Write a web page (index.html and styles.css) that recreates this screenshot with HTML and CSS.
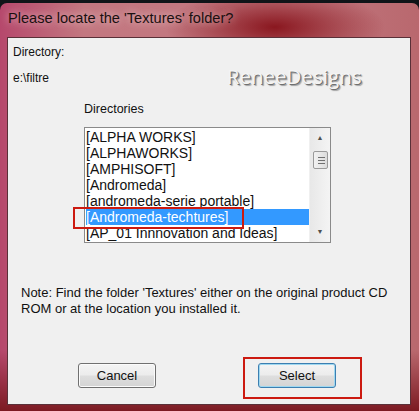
FILE: index.html
```html
<!DOCTYPE html>
<html lang="en">
<head>
    <meta charset="UTF-8">
    <title>Please locate the 'Textures' folder?</title>
    <link rel="stylesheet" href="styles.css">
</head>
<body>
    <div class="window">
        <div class="titlebar">Please locate the 'Textures' folder?</div>
        <div class="client">
            <div class="label">Directory:</div>
            <div class="path-row">
                <span class="path">e:\filtre</span>
                <span class="logo">ReneeDesigns</span>
            </div>

            <div class="dirs">
                <div class="label">Directories</div>
                <div class="listbox">
                    <ul class="items">
                        <li>[ALPHA WORKS]</li>
                        <li>[ALPHAWORKS]</li>
                        <li>[AMPHISOFT]</li>
                        <li>[Andromeda]</li>
                        <li>[andromeda-serie portable]</li>
                        <li class="selected">[Andromeda-techtures]</li>
                        <li>[AP_01 Innnovation and Ideas]</li>
                    </ul>
                    <div class="scrollbar">
                        <span class="arrow">&#9650;</span>
                        <span class="thumb"></span>
                        <span class="arrow down">&#9660;</span>
                    </div>
                    <span class="mark mark-item"></span>
                </div>
            </div>

            <p class="note">Note: Find the folder 'Textures' either on the original product CD ROM or at the location you installed it.</p>

            <div class="buttons">
                <button class="btn">Cancel</button>
                <div class="select-wrap">
                    <button class="btn default">Select</button>
                    <span class="mark mark-btn"></span>
                </div>
            </div>
        </div>
    </div>
</body>
</html>
```

FILE: styles.css
```css
body {
    margin: 0;
    width: 419px;
    height: 411px;
    overflow: hidden;
    background: #101418;
    font-family: 'Liberation Sans', Arial, sans-serif;
}

.window {
    margin-top: 3px;
    height: 408px;
    border-radius: 7px 7px 0 0;
    background:
        radial-gradient(ellipse 110px 38px at 275px 24px, rgba(135, 18, 26, 0.95), rgba(135, 18, 26, 0) 100%),
        linear-gradient(180deg, rgba(0, 0, 0, 0) 85%, #7c1a22 100%),
        linear-gradient(90deg, #b6486c 0%, #c37780 20%, #c27880 70%, #b9686e 100%);
    padding: 0 8px 6px 7px;
    box-sizing: border-box;
    display: flex;
    flex-direction: column;
}

.titlebar {
    height: 34px;
    line-height: 30px;
    padding-left: 1px;
    font-size: 14.6px;
    color: #1a1010;
    text-shadow: 0 0 8px rgba(255, 235, 235, 0.8);
}

.client {
    flex: 1;
    background: #f0f0f0;
    border: 1px solid #5a3038;
    padding: 7px 0 0 5px;
    font-size: 12px;
    color: #111;
    display: flex;
    flex-direction: column;
}

.label {
    line-height: 15px;
}

.path-row {
    display: flex;
    align-items: center;
    margin-top: 6px;
    height: 24px;
}

.path {
    width: 214px;
}

.logo {
    font-family: 'Open Sans', sans-serif;
    font-size: 20px;
    color: #f4f4f4;
    letter-spacing: 0.3px;
    margin-top: -4px;
    text-shadow: 1px 1px 0 #707070, 2px 2px 1px #a0a0a0;
}

.dirs {
    margin: 12px 0 0 71px;
}

.dirs .label {
    font-size: 12.5px;
    margin-bottom: 10px;
}

.listbox {
    position: relative;
    width: 245px;
    height: 114px;
    border: 1px solid #8a8a8a;
    background: #fff;
    display: flex;
}

.items {
    list-style: none;
    margin: 0;
    padding: 1px 0 0 1px;
    flex: 1;
    overflow: hidden;
    font-size: 14px;
}

.items li {
    height: 16px;
    line-height: 16px;
    white-space: nowrap;
}

.items li.selected {
    background: #3399ff;
    color: #fff;
}

.scrollbar {
    width: 20px;
    background: linear-gradient(90deg, #e8e8e8, #f4f4f4);
    border-left: 1px solid #f0f0f0;
    display: flex;
    flex-direction: column;
    align-items: center;
}

.arrow {
    font-size: 7px;
    color: #505050;
    height: 20px;
    line-height: 20px;
}

.arrow.down {
    margin-top: auto;
}

.thumb {
    width: 15px;
    height: 18px;
    margin-top: 3px;
    border: 1px solid #9a9a9a;
    border-radius: 2px;
    box-sizing: border-box;
    background:
        linear-gradient(#707070, #707070) 4px 5px / 7px 1px no-repeat,
        linear-gradient(#707070, #707070) 4px 8px / 7px 1px no-repeat,
        linear-gradient(#707070, #707070) 4px 11px / 7px 1px no-repeat,
        linear-gradient(90deg, #f2f2f2, #dcdcdc);
}

.mark {
    position: absolute;
    border: 2px solid #cc1a10;
    box-sizing: border-box;
}

.mark-item {
    left: -12px;
    top: 79px;
    width: 171px;
    height: 22px;
}

.note {
    margin: 42px 0 0 8px;
    width: 380px;
    font-size: 13px;
    line-height: 16px;
}

.buttons {
    display: flex;
    align-items: center;
    margin-top: 46px;
    padding-left: 65px;
}

.btn {
    width: 78px;
    height: 25px;
    font-family: inherit;
    font-size: 13px;
    color: #111;
    border: 1px solid #707070;
    border-radius: 3px;
    background: linear-gradient(180deg, #f4f4f4 0%, #ececec 48%, #dedede 52%, #d4d4d4 100%);
    box-shadow: inset 0 0 0 1px #fbfbfb;
    padding: 0;
}

.select-wrap {
    position: relative;
    margin-left: 102px;
}

.btn.default {
    border-color: #3c7fb1;
    box-shadow: inset 0 0 0 1px #9fd8f0;
}

.mark-btn {
    left: -15px;
    top: -6px;
    width: 119px;
    height: 42px;
}
```
